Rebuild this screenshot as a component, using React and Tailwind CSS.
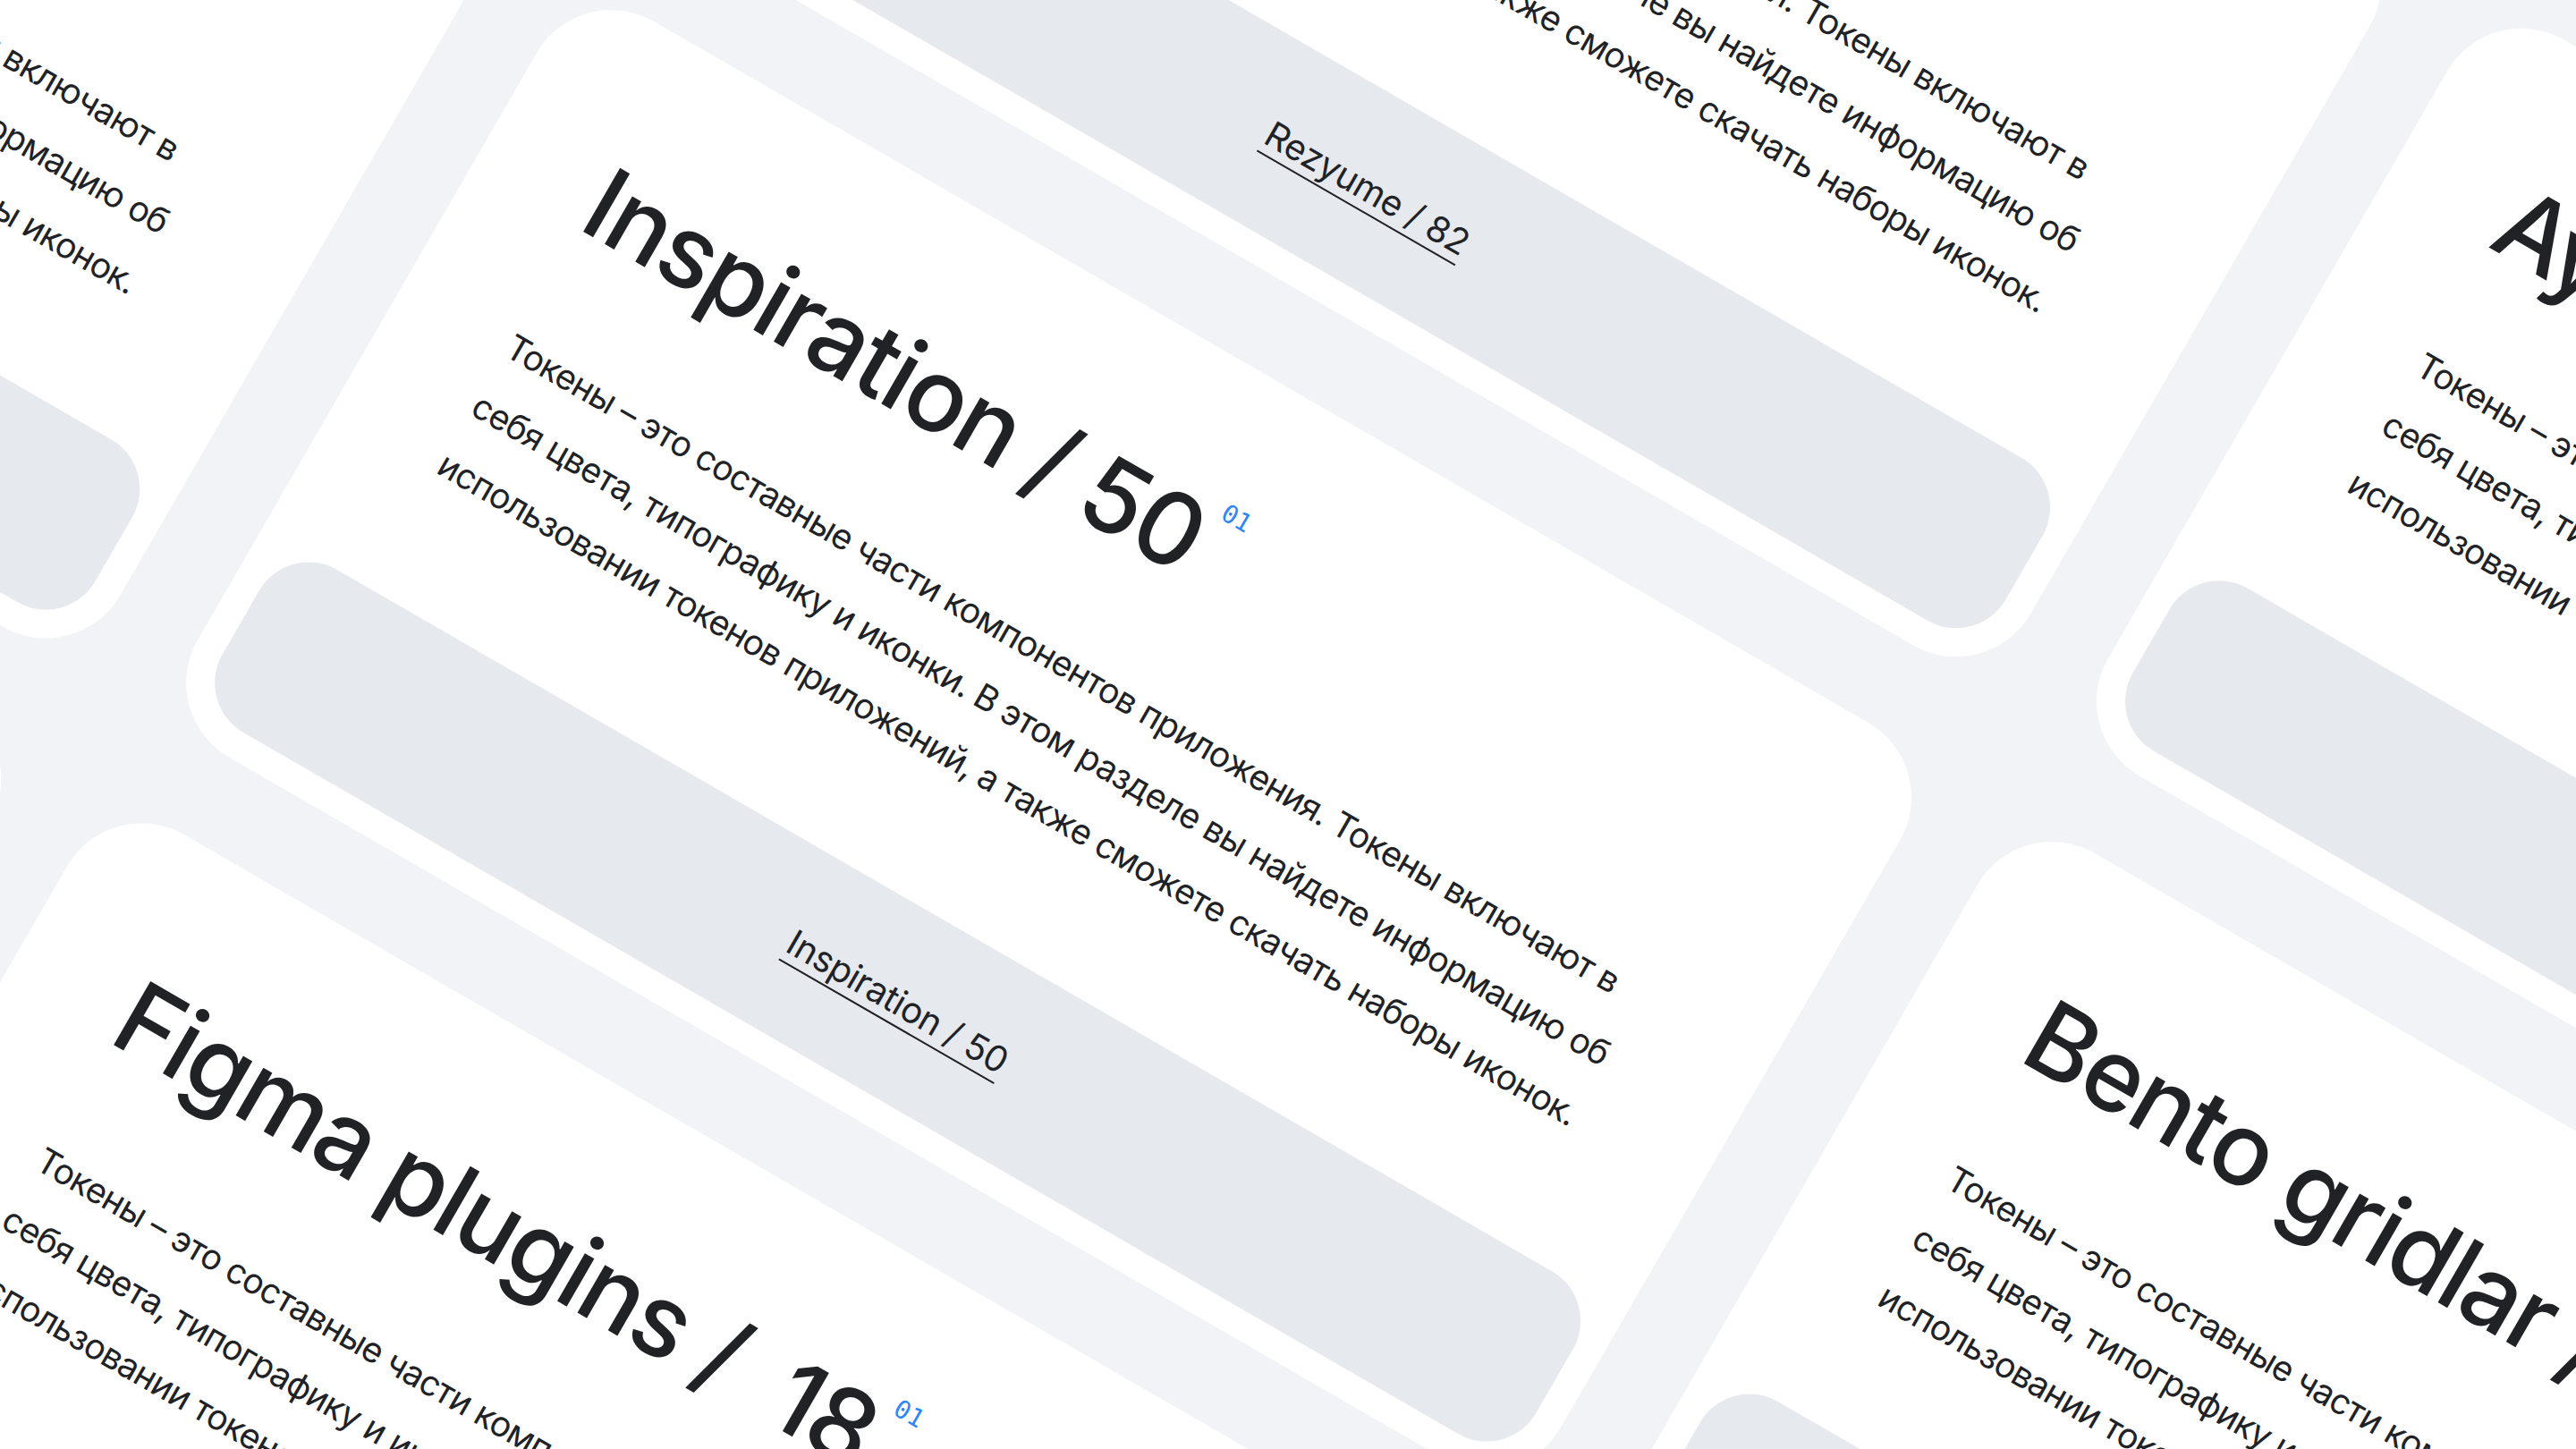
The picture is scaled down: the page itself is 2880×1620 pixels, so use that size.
import React from "react";

const cards = [
  { title: "Tokenlar / 12", link: "Tokenlar / 12" },
  { title: "Rezyume / 82", link: "Rezyume / 82" },
  { title: "Ayollar / 24", link: "Ayollar / 24" },
  { title: "Ikonkalar / 64", link: "Ikonkalar / 64" },
  { title: "Inspiration / 50", link: "Inspiration / 50" },
  { title: "Bento gridlar / 36", link: "Bento gridlar / 36" },
  { title: "Landing / 40", link: "Landing / 40" },
  { title: "Figma plugins /  18", link: "Figma plugins / 18" },
  { title: "Dashboard / 27", link: "Dashboard / 27" },
];

function Card({ title, link }) {
  return (
    <div className="flex h-[950px] w-[1760px] flex-col rounded-[96px] bg-white p-8">
      <div className="px-[104px] pt-[114px]">
        <div className="flex items-start">
          <h2 className="whitespace-pre text-[113px] font-[450] leading-none tracking-[-0.02em] text-[#202226]">
            {title}
          </h2>
          <span className="ml-[8px] mt-[-4px] font-['DejaVu_Sans_Mono',monospace] text-[28px] leading-none text-[#2f86f6]">
            01
          </span>
        </div>
        <p className="mt-[96px] whitespace-nowrap text-[39px] leading-[76px] tracking-[-0.022em] text-[#202226]">
          Токены – это составные части компонентов приложения. Токены включают в
          <br />
          себя цвета, типографику и иконки. В этом разделе вы найдете информацию об
          <br />
          использовании токенов приложений, а также сможете скачать наборы иконок.
        </p>
      </div>
      <div className="mt-auto flex h-[210px] items-center justify-center rounded-[64px] bg-[#e6e9ee]">
        <a href="#" className="text-[40px] tracking-[-0.01em] text-[#202226] underline decoration-2 underline-offset-[10px]">
          {link}
        </a>
      </div>
    </div>
  );
}

export default function App() {
  return (
    <div className="relative h-[1620px] w-[2880px] overflow-hidden bg-[#f2f3f6] font-['Inter','Noto_Sans',sans-serif]">
      <div className="absolute left-[648px] top-[-24px] origin-top-left rotate-[30deg]">
        <div className="absolute left-[-1860px] top-[-1050px] grid grid-cols-[repeat(3,1760px)] gap-[100px]">
          {cards.map((c) => (
            <Card key={c.title} title={c.title} link={c.link} />
          ))}
        </div>
      </div>
    </div>
  );
}
